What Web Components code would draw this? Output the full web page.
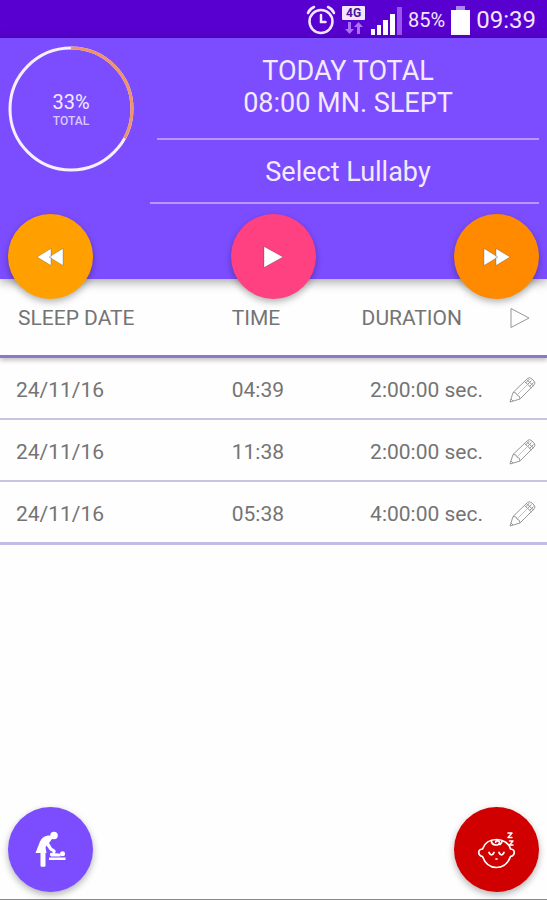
<!DOCTYPE html>
<html lang="en">
<head>
<meta charset="utf-8">
<meta name="viewport" content="width=device-width, initial-scale=1">
<title>Sleep tracker</title>
<style>
    body {
        margin: 0;
        background: #fefefe;
        font-family: Roboto, "Liberation Sans", sans-serif;
    }
</style>
</head>
<body>
<sleep-app>
    <status-bar slot="status" battery="85%" time="09:39"></status-bar>
    <progress-ring slot="ring" value="33">TOTAL</progress-ring>
    <span slot="title">TODAY TOTAL<br>08:00 MN. SLEPT</span>
    <span slot="lullaby">Select Lullaby</span>
    <round-button slot="controls" icon="rewind" label="Previous" style="--fab: #ffa000"></round-button>
    <round-button slot="controls" icon="play" label="Play" style="--fab: #ff4081"></round-button>
    <round-button slot="controls" icon="forward" label="Next" style="--fab: #ff8a00"></round-button>
    <sleep-log data-rows='[["24/11/16","04:39","2:00:00 sec."],["24/11/16","11:38","2:00:00 sec."],["24/11/16","05:38","4:00:00 sec."]]'></sleep-log>
    <round-button slot="actions" icon="change" label="Diaper change" style="--fab: #7c4dff"></round-button>
    <round-button slot="actions" icon="baby" label="Baby sleep" style="--fab: #d00000"></round-button>
</sleep-app>
<script>
const icons = {
    rewind: `<path d="M29 43 43 34.5v17zM41 43l14-8.5v17z" fill="#fff" stroke="#0003"/>`,
    play: `<path d="M33 32.500 52 43 33 53.500z" fill="#fff" stroke="#0003"/>`,
    forward: `<path d="M30 34.500 44 43l-14 8.500zM42 34.500 56 43l-14 8.500z" fill="#fff" stroke="#0003"/>`,
    change: `<g fill="#fff">
        <circle cx="46" cy="28.500" r="3.800"/>
        <path d="M40 28.500c2.500-.5 4 1 4 3.500l-3 4 3 5 4 3-1 2-5-2.500-3.500-5-1 2 1 5.500h-11l4.500-11.500c1.500-3.500 4-5.500 8-6z"/>
        <path d="M32.500 45h5v13.500q0 1.200-1.200 1.200h-2.600q-1.200 0-1.200-1.200z"/>
        <path d="M41 50.500h16.500v2.500H41z"/>
        <path d="M42 46.500q1-1.500 2.500-.2V41.500l1.800.5.500 4.200 4.500.3 1.200 1.300V49.500h-9.500q-1.500-1-1-3z"/>
        <circle cx="54.500" cy="46.800" r="2.500"/></g>`,
    baby: `<g fill="none" stroke="#fff" stroke-width="1.700" stroke-linecap="round" stroke-linejoin="round">
        <path d="M28.500 42C30.500 36 36 32.500 42.500 32.500S55 36 56.500 42c5 .5 5 6 0 7.500C54 56.500 49 60.500 42.500 60.500S31 56.500 28.500 49.500c-5-1.500-5-7 0-7.500z"/>
        <path d="M37.500 33.500c-.5 5 7.500 6 8 2.200.3-2.200-3.800-2.700-3.800-.5M48 34c0 1.800-.8 2.800-2 3.500"/>
        <path d="M35 45.500q2.500 5 5 0M45 45.500q2.500 5 5 0"/>
        <path d="M42 52h1"/>
        <path d="M54 26h4l-4 4.500h4M55.500 34h3.500l-3.500 4h3.500" stroke-width="1.500"/></g>`
};

class StatusBar extends HTMLElement {
    constructor() {
        super();
        this.attachShadow({ mode: 'open' });
        this.shadowRoot.innerHTML = `<style>
            :host {
                display: flex;
                align-items: center;
                justify-content: flex-end;
                height: 38px;
                padding: 2px 11px 0 0;
                box-sizing: border-box;
                background: #5800cf;
                color: #f3e6ff;
            }
            svg { display: block; }
            .net {
                display: grid;
                justify-items: center;
                row-gap: 2px;
                margin: 0 6px;
            }
            .net span {
                width: 23px;
                background: #f3e6ff;
                color: #4a10a0;
                border-radius: 1px;
                font: bold 12px/14px Roboto, "Liberation Sans", sans-serif;
                text-align: center;
            }
            .battery { font-size: 20px; margin: 0 6px; }
            .time { font-size: 24px; margin-left: 6px; }
        </style>
        <svg width="30" height="30" viewBox="0 0 30 30" fill="none" stroke="#f3e6ff" stroke-width="2.500" stroke-linecap="round">
            <circle cx="15" cy="16.500" r="11.500"/>
            <path d="M15 10v7h4.500M2 8Q3.500 4 8 2M28 8Q26.500 4 22 2"/>
        </svg>
        <div class="net">
            <span>4G</span>
            <svg width="20" height="12" viewBox="0 0 20 12" fill="#ab70ff"><path d="M4 0h3v7h3l-4.500 5L1 7h3zM13 12h3V5h3l-4.500-5L10 5h3z"/></svg>
        </div>
        <svg width="31" height="30" viewBox="0 0 31 30" fill="#fff">
            <path d="M0 24h4v6H0zM6 20h4v10H6zM12 15h5v15h-5zM19 9h5v21h-5z"/>
            <path d="M26 2h5v28h-5z" fill="#9a55f0"/>
        </svg>
        <span class="battery"></span>
        <svg width="19" height="29" viewBox="0 0 19 29"><path d="M5 0h9v4H5z" fill="#b184f5"/><path d="M0 4h19v25H0z" fill="#fff"/></svg>
        <span class="time"></span>`;
    }
    connectedCallback() {
        this.shadowRoot.querySelector('.battery').textContent = this.getAttribute('battery');
        this.shadowRoot.querySelector('.time').textContent = this.getAttribute('time');
    }
}

class ProgressRing extends HTMLElement {
    constructor() {
        super();
        this.attachShadow({ mode: 'open' });
    }
    connectedCallback() {
        const value = this.getAttribute('value');
        this.shadowRoot.innerHTML = `<style>
            :host {
                display: grid;
                width: 126px;
                height: 126px;
                place-items: center;
                color: #f3eaff;
            }
            svg, .text { grid-area: 1 / 1; }
            .text { display: grid; justify-items: center; }
            .value { font-size: 20px; line-height: 24px; }
            .label { font-size: 12px; line-height: 14px; font-weight: 500; color: #d9c8ff; }
        </style>
        <svg width="126" height="126" viewBox="0 0 126 126" fill="none" stroke-width="3">
            <circle cx="63" cy="63" r="61" stroke="#f7efff"/>
            <circle cx="63" cy="63" r="61" stroke="#f09468" pathLength="100" stroke-dasharray="${value} 100" transform="rotate(-90 63 63)"/>
        </svg>
        <div class="text">
            <span class="value">${value}%</span>
            <span class="label"><slot></slot></span>
        </div>`;
    }
}

class RoundButton extends HTMLElement {
    constructor() {
        super();
        this.attachShadow({ mode: 'open' });
    }
    connectedCallback() {
        this.shadowRoot.innerHTML = `<style>
            :host { display: block; }
            button {
                display: block;
                width: 85px;
                height: 85px;
                padding: 0;
                border: 0;
                border-radius: 50%;
                background: var(--fab);
                box-shadow: 0 3px 7px rgba(0, 0, 0, .3);
                cursor: pointer;
            }
            svg { display: block; }
        </style>
        <button type="button" aria-label="${this.getAttribute('label')}">
            <svg width="85" height="85" viewBox="0 0 85 85">${icons[this.getAttribute('icon')]}</svg>
        </button>`;
    }
}

class SleepLog extends HTMLElement {
    constructor() {
        super();
        this.attachShadow({ mode: 'open' });
    }
    connectedCallback() {
        const rows = JSON.parse(this.dataset.rows);
        this.shadowRoot.innerHTML = `<style>
            :host { display: block; color: #747474; }
            table {
                width: 100%;
                table-layout: fixed;
                border-collapse: separate;
                border-spacing: 0;
                font-size: 21px;
                line-height: 26px;
            }
            th, td {
                box-sizing: border-box;
                padding: 0;
                font-weight: normal;
                text-align: left;
                white-space: nowrap;
            }
            th { height: 79px; padding-top: 2px; border-bottom: 3px solid #8d78c8; }
            td { height: 62px; padding-top: 3px; border-bottom: 2px solid #cbc3e2; }
            thead { box-shadow: 0 3px 4px rgba(0, 0, 0, .2); }
            tr:last-child td { height: 63px; border-bottom: 3px solid #c5bce6; }
            .date { width: 42%; padding-left: 16px; }
            th.date { padding-left: 18px; }
            .time { padding-left: 2px; }
            .duration { text-align: right; }
            th.duration { padding-right: 21px; }
            .tool { width: 64px; padding-left: 24px; }
            button {
                display: block;
                padding: 0;
                border: 0;
                background: none;
                cursor: pointer;
            }
            svg { display: block; fill: none; stroke: #979797; stroke-linejoin: round; }
        </style>
        <table>
            <thead>
                <tr>
                    <th class="date">SLEEP DATE</th>
                    <th class="time">TIME</th>
                    <th class="duration">DURATION</th>
                    <th class="tool"><button type="button" aria-label="Play all"><svg width="28" height="28" viewBox="0 0 28 28"><path d="M4 4.500 22 14 4 23.500z"/></svg></button></th>
                </tr>
            </thead>
            <tbody>${rows.map((r) => this.renderRow(r)).join('')}</tbody>
        </table>`;
    }
    renderRow(r) {
        return `<tr>
            <td class="date">${r[0]}</td>
            <td class="time">${r[1]}</td>
            <td class="duration">${r[2]}</td>
            <td class="tool"><button type="button" aria-label="Edit"><svg width="30" height="30" viewBox="0 0 30 30">
                <path d="M3 27 6 17.500 20.500 3.500q2-2 4.500.5l2 2q2 2 0 4L13 24zM6 17.500q3.500-.5 4 2.500 3 .5 3 4M4 24l2 2M17.500 6.500l7 6.500M19.500 4.500l7 6.500M18.500 8l4-4M20.500 9.500l4-4M22.500 11.500l4-4"/>
                <path d="M10 20 20.500 9.500" stroke="#c4c4c4"/>
            </svg></button></td>
        </tr>`;
    }
}

class SleepApp extends HTMLElement {
    constructor() {
        super();
        this.attachShadow({ mode: 'open' });
        this.shadowRoot.innerHTML = `<style>
            :host {
                display: flex;
                flex-direction: column;
                min-height: 100vh;
                box-sizing: border-box;
                border-bottom: 1px solid #888;
            }
            header {
                position: relative;
                background: #7c4dff;
                color: #f3eaff;
                box-shadow: 0 3px 10px rgba(0, 0, 0, .35);
            }
            .summary {
                display: grid;
                grid-template-columns: 126px 1fr;
                column-gap: 16px;
                padding: 8px 8px 0;
            }
            h1, .lullaby {
                margin: 0;
                font-size: 27px;
                line-height: 32px;
                font-weight: normal;
                text-align: center;
            }
            h1 {
                margin-left: 7px;
                padding: 9px 0 19px;
                border-bottom: 2px solid #b896ff;
            }
            .lullaby {
                display: block;
                width: 100%;
                padding: 16px 0 14px 7px;
                border: 0;
                border-bottom: 2px solid #b896ff;
                background: none;
                color: inherit;
                font-family: inherit;
                cursor: pointer;
            }
            .controls, footer {
                display: flex;
                justify-content: space-between;
                padding: 0 8px;
            }
            .controls { padding-top: 10px; margin-bottom: -20px; }
            footer { margin-top: auto; padding-bottom: 7px; }
        </style>
        <slot name="status"></slot>
        <header>
            <div class="summary">
                <slot name="ring"></slot>
                <div>
                    <h1><slot name="title"></slot></h1>
                    <button type="button" class="lullaby"><slot name="lullaby"></slot></button>
                </div>
            </div>
            <div class="controls"><slot name="controls"></slot></div>
        </header>
        <main><slot></slot></main>
        <footer><slot name="actions"></slot></footer>`;
    }
}

customElements.define('status-bar', StatusBar);
customElements.define('progress-ring', ProgressRing);
customElements.define('round-button', RoundButton);
customElements.define('sleep-log', SleepLog);
customElements.define('sleep-app', SleepApp);
</script>
</body>
</html>
